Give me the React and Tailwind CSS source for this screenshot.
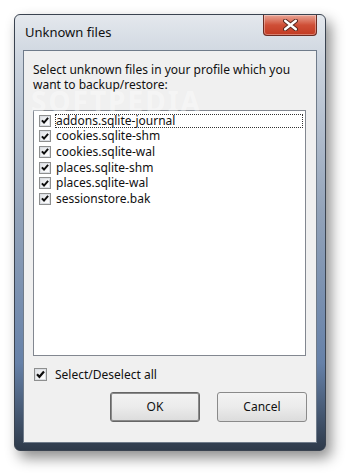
import { useState } from 'react';

const FILES = [
  'addons.sqlite-journal',
  'cookies.sqlite-shm',
  'cookies.sqlite-wal',
  'places.sqlite-shm',
  'places.sqlite-wal',
  'sessionstore.bak',
];

function Checkbox({ checked, size = 'md' }) {
  const box = size === 'sm' ? 'w-[12px] h-[12px]' : 'w-[13px] h-[13px]';
  return (
    <span className={`${box} shrink-0 border border-[#8e8f8f] bg-white flex items-center justify-center`}>
      <span className="w-full h-full border border-[#dcdfe4] bg-gradient-to-br from-[#e2e4e8] to-[#ffffff] flex items-center justify-center">
        {checked && (
          <svg viewBox="0 0 9 9" className="w-[9px] h-[9px]">
            <path d="M1 4.3 L3.4 6.8 L8 1.6" fill="none" stroke="#0d0d0d" strokeWidth="2.2" />
          </svg>
        )}
      </span>
    </span>
  );
}

function CloseButton() {
  return (
    <div className="w-[54px] h-[21px] rounded-b-[4px] border border-t-0 border-[#6b2b22] bg-gradient-to-b from-[#e8a394] via-[#cf4f37] to-[#c23a22] flex items-center justify-center shadow-[inset_0_0_0_1px_rgba(255,255,255,0.35)]">
      <svg viewBox="0 0 14 11" className="w-[15px] h-[12px]">
        <path d="M2 1.5 L12 9.5 M12 1.5 L2 9.5" stroke="#5a2a22" strokeWidth="4" strokeLinecap="round" />
        <path d="M2 1.5 L12 9.5 M12 1.5 L2 9.5" stroke="#ffffff" strokeWidth="2.2" strokeLinecap="round" />
      </svg>
    </div>
  );
}

function Button({ label, isDefault }) {
  return (
    <button
      type="button"
      className={`w-[90px] h-[30px] rounded-[3px] border ${
        isDefault ? 'border-[#666] shadow-[inset_0_0_0_1px_#8a8a8a]' : 'border-[#8a8a8a]'
      } bg-gradient-to-b from-[#f3f3f3] via-[#ebebeb] to-[#dcdcdc] text-[12px] text-[#111]`}
    >
      {label}
    </button>
  );
}

export default function App() {
  const [checked, setChecked] = useState(FILES.map(() => true));

  return (
    <div
      className="w-[350px] h-[476px] bg-white pt-[14px] pl-[14px]"
      style={{ fontFamily: '"Noto Sans", "Liberation Sans", sans-serif' }}
    >
      <div className="relative w-[312px] h-[437px] flex flex-col rounded-[6px] border border-[#3a4350] bg-[linear-gradient(180deg,#e4e8ed_0%,#cdd5df_10%,#93a3b9_45%,#6681a8_80%,#2e3a4a_100%)] shadow-[5px_7px_14px_rgba(0,0,0,0.45)]">
        <div className="h-[35px] flex items-start justify-between shrink-0">
          <span className="pl-[10px] pt-[9px] text-[13px] text-[#111] leading-[17px]">Unknown files</span>
          <div className="mr-[8px]">
            <CloseButton />
          </div>
        </div>

        <div className="flex-1 mx-[8px] mb-[7px] border border-[#6f7b8a] bg-[#f0f0f0] flex flex-col">
          <p className="pl-[9px] pt-[11px] text-[12px] leading-[15px] text-[#111]">
            Select unknown files in your profile which you
            <br />
            want to backup/restore:
          </p>

          <div className="ml-[9px] mt-[18px] w-[273px] h-[246px] border border-[#828790] bg-white pt-[2px] pl-[5px] pr-[2px]">
            {FILES.map((name, i) => (
              <div
                key={name}
                className="h-[15.6px] flex items-center gap-[4px] cursor-default"
                onClick={() => setChecked((prev) => prev.map((v, j) => (j === i ? !v : v)))}
              >
                <Checkbox checked={checked[i]} size="sm" />
                <span
                  className={`flex-1 h-[14px] pl-[1px] flex items-center text-[12px] leading-[14px] text-[#111] ${
                    i === 0 ? 'outline outline-1 outline-dotted outline-[#333] -outline-offset-1' : ''
                  }`}
                >
                  {name}
                </span>
              </div>
            ))}
          </div>

          <div className="ml-[10px] mt-[11px] flex items-center gap-[8px]">
            <Checkbox checked={checked.every(Boolean)} />
            <span className="text-[12px] leading-[15px] text-[#111]">Select/Deselect all</span>
          </div>

          <div className="mt-[10px] flex justify-end gap-[17px] pr-[9px]">
            <Button label="OK" isDefault />
            <Button label="Cancel" />
          </div>
        </div>

        <span className="absolute left-[16px] top-[74px] text-[28px] leading-[24px] font-bold tracking-[2px] text-white/40 pointer-events-none select-none">
          SOFTPEDIA
        </span>
      </div>
    </div>
  );
}
